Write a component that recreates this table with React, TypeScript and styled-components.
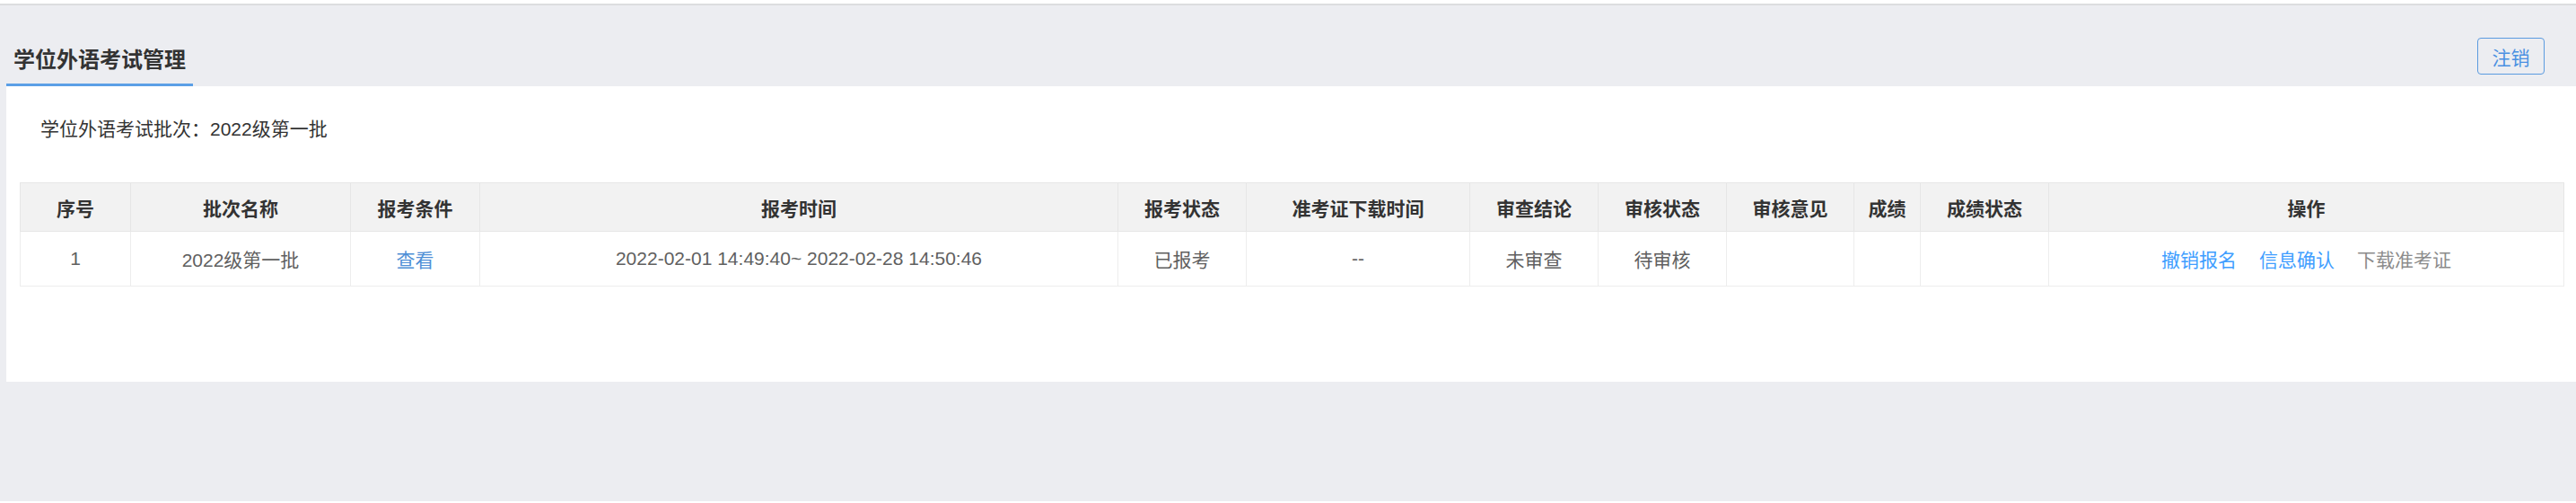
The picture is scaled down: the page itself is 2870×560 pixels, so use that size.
import React from "react";
import styled, { createGlobalStyle } from "styled-components";

const GlobalStyle = createGlobalStyle`
  html, body {
    margin: 0;
    padding: 0;
    background: #ffffff;
  }
  body {
    font-family: "Liberation Sans", "Noto Sans CJK SC", sans-serif;
  }
  * { box-sizing: border-box; }
`;

const Shell = styled.div`
  padding-top: 4px;
  background: #ffffff;
  width: 2870px;
`;

const Page = styled.div`
  border-top: 2px solid #dcdddf;
  background: #ecedf1;
  height: 554px;
  display: flex;
  flex-direction: column;
`;

const Header = styled.header`
  height: 90px;
  display: flex;
  justify-content: space-between;
  align-items: flex-end;
  padding: 0 35px 0 7px;
`;

const Tab = styled.div`
  font-size: 24px;
  font-weight: bold;
  color: #333333;
  line-height: 30px;
  padding: 0 8px 11px;
  border-bottom: 3px solid #5b9fe6;
`;

const LogoutButton = styled.button`
  align-self: flex-start;
  margin-top: 36px;
  width: 75px;
  height: 41px;
  border: 1px solid #5b9be0;
  border-radius: 4px;
  background: transparent;
  color: #4a90e2;
  font-family: "Liberation Sans", "Noto Sans CJK SC", sans-serif;
  font-size: 21px;
  padding: 0;
  cursor: pointer;
`;

const Panel = styled.main`
  margin-left: 7px;
  height: 329px;
  background: #ffffff;
  padding: 33px 14px 0 15px;
`;

const BatchLabel = styled.div`
  font-size: 21px;
  line-height: 30px;
  color: #333333;
  padding-left: 23px;
  margin-bottom: 44px;
`;

const Table = styled.table`
  width: 2834px;
  table-layout: fixed;
  border-collapse: collapse;
  border: 1px solid #e6e6e6;
`;

const HeadCell = styled.th`
  height: 54px;
  padding: 0;
  background: #f2f2f2;
  border: 1px solid #e6e6e6;
  font-size: 21px;
  font-weight: bold;
  color: #333333;
  text-align: center;
`;

const Cell = styled.td`
  height: 61px;
  padding: 0;
  border: 1px solid #ededed;
  font-size: 21px;
  color: #606060;
  text-align: center;
  white-space: nowrap;
`;

const ViewLink = styled.a`
  color: #4f8fd6;
  text-decoration: none;
  cursor: pointer;
`;

const Actions = styled.div`
  display: flex;
  justify-content: center;
  gap: 25px;
`;

const ActionLink = styled.a<{ $muted?: boolean }>`
  color: ${(p) => (p.$muted ? "#8c8c8c" : "#409eff")};
  text-decoration: none;
  cursor: pointer;
`;

const columns: { title: string; width: number }[] = [
  { title: "序号", width: 123 },
  { title: "批次名称", width: 245 },
  { title: "报考条件", width: 144 },
  { title: "报考时间", width: 711 },
  { title: "报考状态", width: 143 },
  { title: "准考证下载时间", width: 249 },
  { title: "审查结论", width: 143 },
  { title: "审核状态", width: 143 },
  { title: "审核意见", width: 142 },
  { title: "成绩", width: 74 },
  { title: "成绩状态", width: 143 },
  { title: "操作", width: 574 },
];

export default function App() {
  return (
    <>
      <GlobalStyle />
      <Shell>
        <Page>
          <Header>
            <Tab>学位外语考试管理</Tab>
            <LogoutButton>注销</LogoutButton>
          </Header>
          <Panel>
            <BatchLabel>学位外语考试批次：2022级第一批</BatchLabel>
            <Table>
              <colgroup>
                {columns.map((c) => (
                  <col key={c.title} style={{ width: c.width }} />
                ))}
              </colgroup>
              <thead>
                <tr>
                  {columns.map((c) => (
                    <HeadCell key={c.title}>{c.title}</HeadCell>
                  ))}
                </tr>
              </thead>
              <tbody>
                <tr>
                  <Cell>1</Cell>
                  <Cell>2022级第一批</Cell>
                  <Cell>
                    <ViewLink>查看</ViewLink>
                  </Cell>
                  <Cell>2022-02-01 14:49:40~ 2022-02-28 14:50:46</Cell>
                  <Cell>已报考</Cell>
                  <Cell>--</Cell>
                  <Cell>未审查</Cell>
                  <Cell>待审核</Cell>
                  <Cell></Cell>
                  <Cell></Cell>
                  <Cell></Cell>
                  <Cell>
                    <Actions>
                      <ActionLink>撤销报名</ActionLink>
                      <ActionLink>信息确认</ActionLink>
                      <ActionLink $muted>下载准考证</ActionLink>
                    </Actions>
                  </Cell>
                </tr>
              </tbody>
            </Table>
          </Panel>
        </Page>
      </Shell>
    </>
  );
}
